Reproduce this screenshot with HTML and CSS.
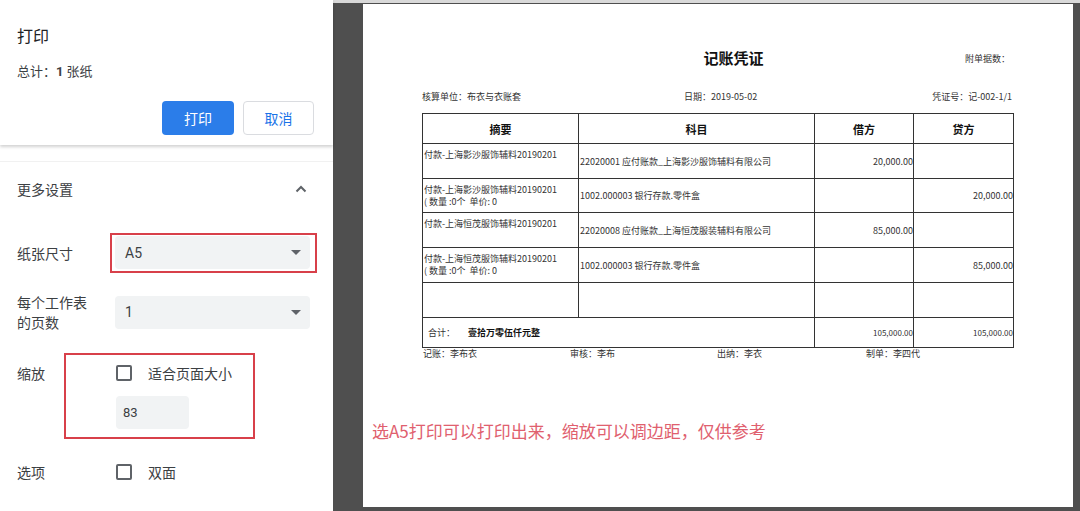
FILE: index.html
```html
<!DOCTYPE html>
<html lang="zh-CN">
<head>
  <meta charset="UTF-8">
  <title>打印</title>
  <link rel="stylesheet" href="styles.css">
</head>
<body>

  <!-- Sidebar -->
  <div class="sidebar">
    <div class="print-header">
      <div class="print-title">打印</div>
      <div class="print-total">总计：<b>1</b> 张纸</div>
      <div class="print-actions">
        <button class="btn btn-primary">打印</button>
        <button class="btn btn-cancel">取消</button>
      </div>
    </div>

    <div class="more-settings">
      <span>更多设置</span>
      <svg class="chevron" width="12" height="8" viewBox="0 0 12 8"><polyline points="1.5,6.5 6,2 10.5,6.5" fill="none" stroke="#5f6368" stroke-width="2"/></svg>
    </div>

    <div class="settings">
      <div class="setting-row row-paper">
        <div class="setting-label">纸张尺寸</div>
        <div class="select"><span>A5</span><i class="caret"></i></div>
      </div>
      <div class="setting-row row-pages">
        <div class="setting-label">每个工作表<br>的页数</div>
        <div class="select"><span>1</span><i class="caret"></i></div>
      </div>
      <div class="setting-row row-scale">
        <div class="setting-label">缩放</div>
        <div class="setting-control">
          <label class="check"><span class="box"></span>适合页面大小</label>
          <div class="scale-input">83</div>
        </div>
      </div>
      <div class="setting-row row-options">
        <div class="setting-label">选项</div>
        <label class="check"><span class="box"></span>双面</label>
      </div>
    </div>

    <!-- annotation boxes -->
    <div class="mark mark-paper"></div>
    <div class="mark mark-scale"></div>
  </div>

  <!-- Preview -->
  <div class="preview">
    <div class="page">
      <div class="voucher">
        <div class="voucher-title">
          <span></span>
          <h1>记账凭证</h1>
          <span class="attach">附单据数：</span>
        </div>
        <div class="voucher-info">
          <span>核算单位：布衣与衣账套</span>
          <span class="info-date">日期：2019-05-02</span>
          <span class="info-no">凭证号：记-002-1/1</span>
        </div>
        <table class="voucher-table">
          <colgroup>
            <col style="width:156px">
            <col style="width:236px">
            <col style="width:99px">
            <col style="width:100px">
          </colgroup>
          <tr class="head">
            <th>摘要</th><th>科目</th><th>借方</th><th>贷方</th>
          </tr>
          <tr class="r35">
            <td class="summary">付款-上海影沙服饰辅料20190201</td>
            <td class="account">22020001 应付账款_上海影沙服饰辅料有限公司</td>
            <td class="amount">20,000.00</td>
            <td class="amount"></td>
          </tr>
          <tr class="r34">
            <td class="summary">付款-上海影沙服饰辅料20190201<br>( 数量 :0个&nbsp; 单价: 0</td>
            <td class="account">1002.000003 银行存款.零件盒</td>
            <td class="amount"></td>
            <td class="amount">20,000.00</td>
          </tr>
          <tr class="r35">
            <td class="summary">付款-上海恒茂服饰辅料20190201</td>
            <td class="account">22020008 应付账款_上海恒茂服装辅料有限公司</td>
            <td class="amount">85,000.00</td>
            <td class="amount"></td>
          </tr>
          <tr class="r35">
            <td class="summary">付款-上海恒茂服饰辅料20190201<br>( 数量 :0个&nbsp; 单价: 0</td>
            <td class="account">1002.000003 银行存款.零件盒</td>
            <td class="amount"></td>
            <td class="amount">85,000.00</td>
          </tr>
          <tr class="r35">
            <td></td><td></td><td></td><td></td>
          </tr>
          <tr class="total">
            <td colspan="2"><span class="total-label">合计：</span><b>壹拾万零伍仟元整</b></td>
            <td class="amount">105,000.00</td>
            <td class="amount">105,000.00</td>
          </tr>
        </table>
        <div class="voucher-sign">
          <span>记账：李布衣</span>
          <span>审核：李布</span>
          <span>出纳：李衣</span>
          <span>制单：李四代</span>
        </div>
      </div>
      <p class="note">选A5打印可以打印出来，缩放可以调边距，仅供参考</p>
    </div>
  </div>

</body>
</html>
```

FILE: styles.css
```css
/* Global */
body {
  margin: 0;
  width: 1080px;
  height: 511px;
  display: flex;
  overflow: hidden;
  font-family: "Noto Sans CJK SC", "Noto Sans", sans-serif;
  background: #fff;
}

/* Sidebar */
.sidebar {
  position: relative;
  width: 333px;
  flex-shrink: 0;
  background: #fff;
  color: #3c4043;
}

.print-header {
  height: 145px;
  box-sizing: border-box;
  padding: 21px 19px 0 17px;
  box-shadow: 0 2px 3px rgba(0, 0, 0, 0.18);
}

.print-title {
  font-size: 16px;
  line-height: 28px;
  color: #202124;
}

.print-total {
  margin-top: 12px;
  font-size: 13px;
  line-height: 20px;
}

.print-total b {
  font-family: "Roboto", sans-serif;
  font-weight: 700;
}

.print-actions {
  display: flex;
  justify-content: flex-end;
  gap: 9px;
  margin-top: 19px;
}

.btn {
  height: 34px;
  padding: 0;
  border-radius: 4px;
  font-family: inherit;
  font-size: 14px;
  cursor: pointer;
}

.btn-primary {
  width: 72px;
  border: none;
  background: #2b7de9;
  color: #fff;
}

.btn-cancel {
  width: 71px;
  border: 1px solid #dadce0;
  background: #fff;
  color: #1a73e8;
}

.more-settings {
  margin-top: 16px;
  border-top: 1px solid #f1f1f1;
  height: 54px;
  padding: 0 26px 0 17px;
  display: flex;
  align-items: center;
  justify-content: space-between;
  font-size: 14px;
}

.settings {
  padding: 20px 23px 0 17px;
}

.setting-row {
  display: grid;
  grid-template-columns: 98px 1fr;
  align-items: center;
  font-size: 14px;
}

.setting-label {
  line-height: 20px;
}

.row-pages {
  margin-top: 23px;
}

.row-scale {
  margin-top: 31px;
  align-items: start;
}

.row-options {
  margin-top: 33px;
}

.select {
  height: 33px;
  background: #f1f3f4;
  border-radius: 4px;
  display: flex;
  align-items: center;
  justify-content: space-between;
  padding: 0 9px 0 10px;
  font-family: "Roboto", sans-serif;
  font-size: 14px;
}

.caret {
  width: 0;
  height: 0;
  border-left: 5px solid transparent;
  border-right: 5px solid transparent;
  border-top: 5px solid #5f6368;
}

.check {
  display: flex;
  align-items: center;
  height: 20px;
  gap: 16px;
  padding-left: 1px;
}

.box {
  width: 12px;
  height: 12px;
  border: 2px solid #5f6368;
  border-radius: 2px;
}

.scale-input {
  margin-top: 13px;
  margin-left: 1px;
  width: 73px;
  height: 33px;
  box-sizing: border-box;
  padding-left: 7px;
  line-height: 33px;
  background: #f1f3f4;
  border-radius: 4px;
  font-family: "Roboto", sans-serif;
  font-size: 13px;
}

/* red annotation boxes */
.mark {
  position: absolute;
  border: 2px solid #d8404a;
  box-sizing: border-box;
}

.mark-paper {
  left: 110px;
  top: 233px;
  width: 207px;
  height: 40px;
}

.mark-scale {
  left: 64px;
  top: 353px;
  width: 191px;
  height: 86px;
}

/* Preview */
.preview {
  flex: 1;
  background: #4f4f4f;
  border-top: 3px solid #d9d9d9;
  padding: 1px 7px 0 30px;
}

.page {
  width: 710px;
  height: 503px;
  background: #fff;
  overflow: hidden;
}

.voucher {
  width: 591px;
  margin-left: 59px;
  padding-top: 44px;
  color: #333;
  font-size: 9px;
}

.voucher-title {
  display: grid;
  grid-template-columns: 1fr auto 1fr;
  align-items: center;
}

.voucher-title h1 {
  margin: 0;
  padding-left: 32px;
  font-size: 15px;
  line-height: 20px;
  color: #111;
}

.attach {
  text-align: right;
  padding-right: 3px;
}

.voucher-info {
  display: flex;
  margin-top: 23px;
  line-height: 12px;
}

.info-date {
  margin-left: 163px;
}

.info-no {
  margin-left: auto;
  padding-right: 1px;
}

.voucher-table {
  margin-top: 10px;
  width: 591px;
  table-layout: fixed;
  border-collapse: collapse;
}

.voucher-table th,
.voucher-table td {
  border: 1px solid #333;
  padding: 0;
}

.voucher-table th {
  font-size: 11px;
  color: #111;
}

.head { height: 30px; }
.r35 { height: 35px; }
.r34 { height: 34px; }
.total { height: 30px; }

.voucher-table td.summary {
  vertical-align: top;
  padding: 5px 0 0 1px;
  line-height: 12px;
}

.voucher-table td.account {
  padding-left: 1px;
}

.voucher-table td.amount {
  text-align: right;
}

.total td {
  font-size: 8px;
}

.total td:first-child {
  font-size: 9px;
  padding-left: 5px;
}

.total-label {
  margin-right: 13px;
}

.total b {
  color: #111;
}

.voucher-sign {
  display: grid;
  grid-template-columns: 147px 147px 149px 1fr;
  line-height: 12px;
  padding-left: 1px;
}

.note {
  margin: 60px 0 0 9px;
  font-size: 17px;
  line-height: 22px;
  color: #e0606e;
}
```
